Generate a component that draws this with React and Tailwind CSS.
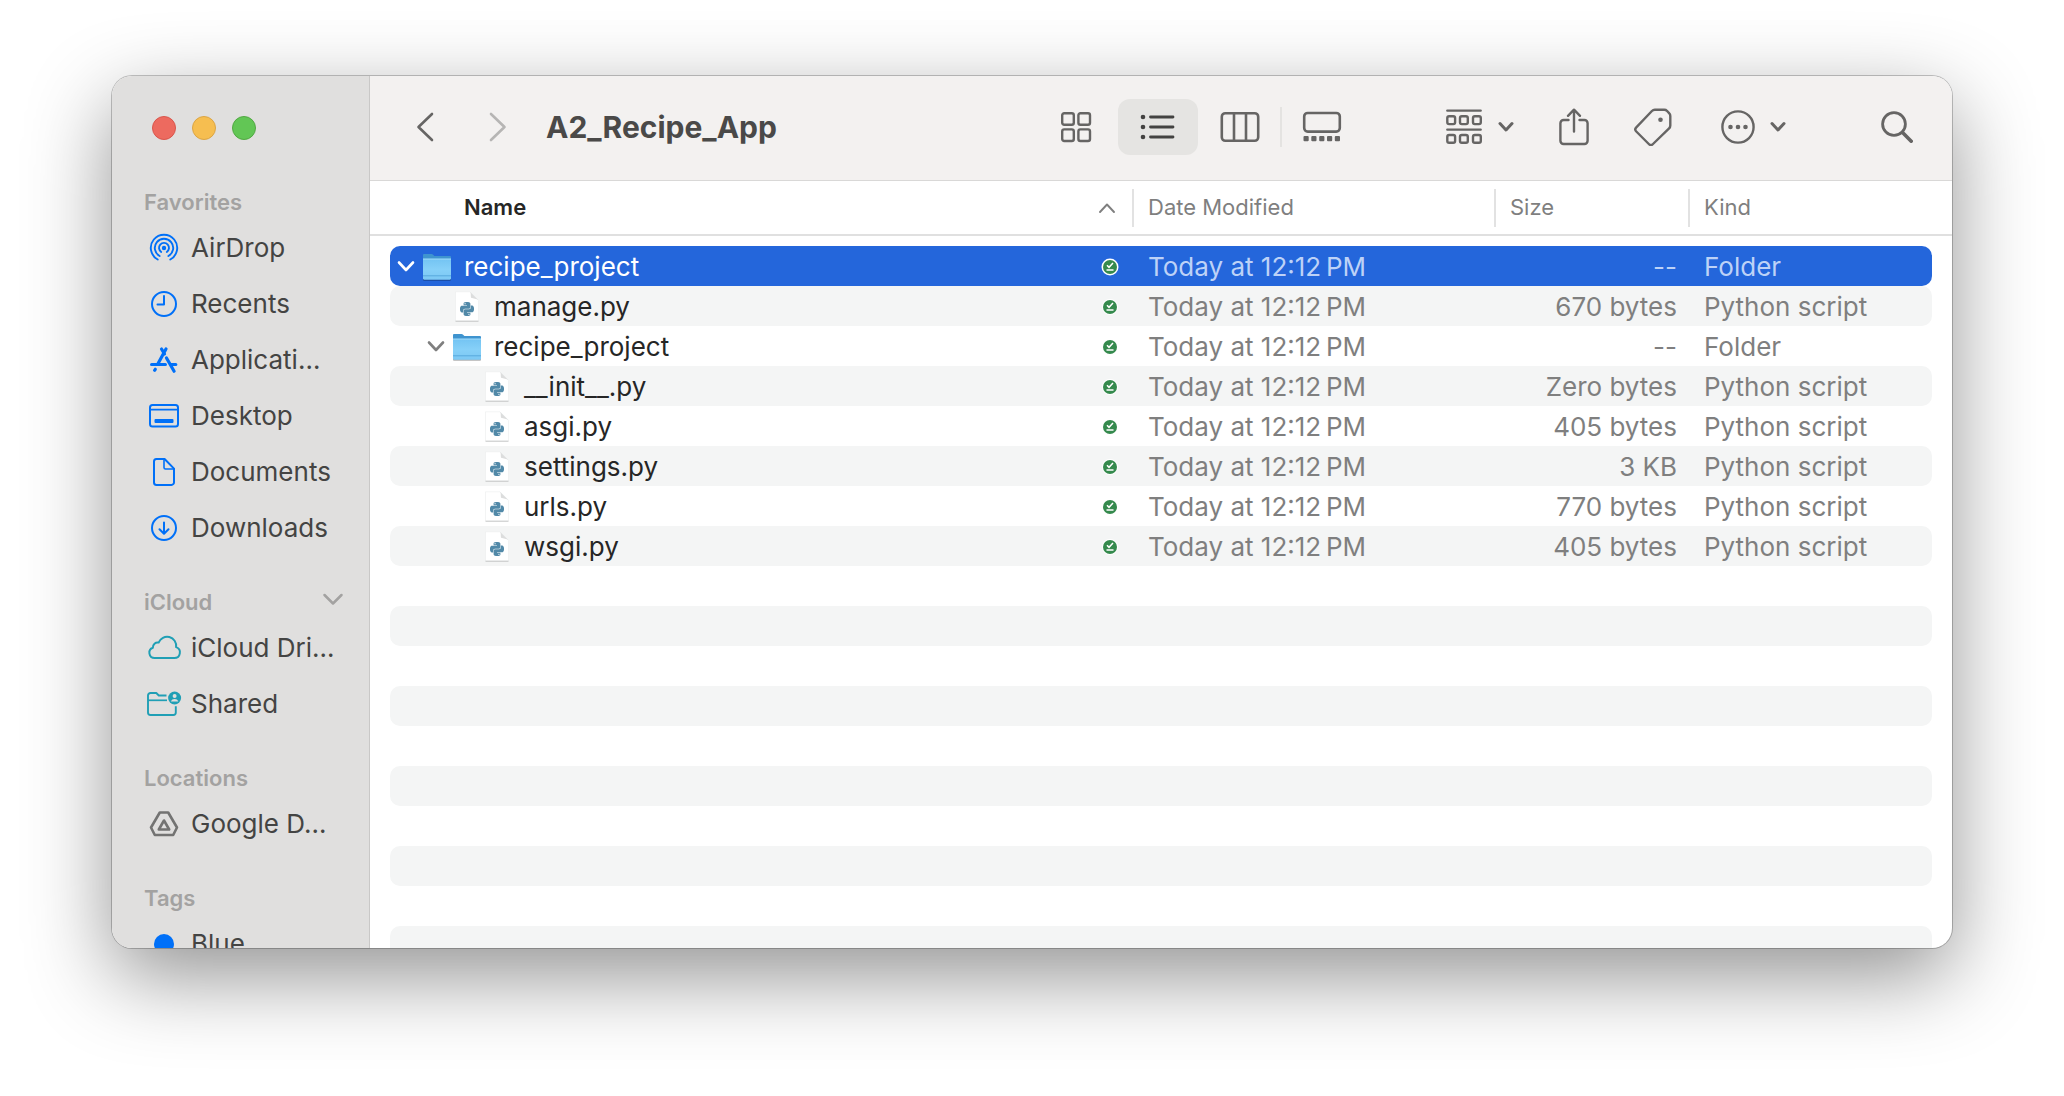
import { SiPython } from "react-icons/si";

const strokeProps = { fill: "none", stroke: "currentColor", strokeLinecap: "round", strokeLinejoin: "round" };

/* ---------- toolbar icons ---------- */

function Chevron({ className, d, viewBox, width = 3 }) {
  return (
    <svg className={className} viewBox={viewBox} {...strokeProps} strokeWidth={width} aria-hidden="true">
      <path d={d} />
    </svg>
  );
}

function GridIcon() {
  return (
    <svg className="h-8 w-8" viewBox="0 0 32 32" {...strokeProps} strokeWidth="2.4" aria-hidden="true">
      <rect x="2.2" y="2.2" width="11.6" height="11.6" rx="2" />
      <rect x="18.4" y="2.2" width="11.6" height="11.6" rx="2" />
      <rect x="2.2" y="18.4" width="11.6" height="11.6" rx="2" />
      <rect x="18.4" y="18.4" width="11.6" height="11.6" rx="2" />
    </svg>
  );
}

function ListIcon() {
  return (
    <svg className="h-8 w-9" viewBox="0 0 36 32" {...strokeProps} strokeWidth="2.8" aria-hidden="true">
      {[6, 16, 26].map((y) => (
        <g key={y}>
          <circle cx="3" cy={y} r="2.3" fill="currentColor" stroke="none" />
          <path d={`M10.500 ${y}h22.500`} />
        </g>
      ))}
    </svg>
  );
}

function ColumnsIcon() {
  return (
    <svg className="h-8 w-10" viewBox="0 0 40 32" {...strokeProps} strokeWidth="2.6" aria-hidden="true">
      <rect x="1.8" y="2.2" width="36.4" height="27.6" rx="3.5" />
      <path d="M14 2.2v27.6M26 2.2v27.6" />
    </svg>
  );
}

function GalleryIcon() {
  return (
    <svg className="h-8 w-10" viewBox="0 0 40 32" {...strokeProps} strokeWidth="2.6" aria-hidden="true">
      <rect x="2.2" y="2" width="35.6" height="18.6" rx="3.5" />
      {[1.5, 9.3, 17.2, 25, 32.8].map((x) => (
        <rect key={x} x={x} y="25" width="5.2" height="5.2" rx="1" fill="currentColor" stroke="none" />
      ))}
    </svg>
  );
}

function GroupIcon() {
  return (
    <svg className="h-9 w-9" viewBox="0 0 36 36" {...strokeProps} strokeWidth="2.4" aria-hidden="true">
      <path d="M1.3 1.6h33.4M1.3 20.6h33.4" />
      {[7.3, 26].map((y) =>
        [1.3, 14, 27].map((x) => <rect key={`${x}-${y}`} x={x} y={y} width="7.8" height="7.8" rx="1.8" />)
      )}
    </svg>
  );
}

function ShareIcon() {
  return (
    <svg className="h-[38px] w-[30px]" viewBox="0 0 30 38" {...strokeProps} strokeWidth="2.4" aria-hidden="true">
      <path d="M9.5 12H4.6a3.2 3.2 0 0 0-3.2 3.2v17.6A3.2 3.2 0 0 0 4.6 36h20.8a3.2 3.2 0 0 0 3.2-3.2V15.2a3.2 3.2 0 0 0-3.2-3.2h-4.900" />
      <path d="M15 23.5V2M9 7.8 15 1.7l6 6.1" />
    </svg>
  );
}

function TagIcon() {
  return (
    <svg className="h-[38px] w-[38px]" viewBox="0 0 38 38" {...strokeProps} strokeWidth="2.4" aria-hidden="true">
      <path d="M20.8 1.8h9.6c1 0 1.800.3 2.500 1l2.400 2.600c.7.7 1 1.500 1 2.500v9.600c0 1.100-.4 2.100-1.200 2.900L19 36c-1.200 1.200-3 1.200-4.200 0L2.300 23.500c-1.200-1.200-1.200-3 0-4.200L17.900 3c.8-.8 1.800-1.200 2.900-1.200Z" />
      <circle cx="26.500" cy="11.800" r="2.300" fill="currentColor" stroke="none" />
    </svg>
  );
}

function MoreIcon() {
  return (
    <svg className="h-9 w-9" viewBox="0 0 36 36" {...strokeProps} strokeWidth="2.4" aria-hidden="true">
      <circle cx="18" cy="18" r="15.6" />
      {[10.5, 18, 25.5].map((x) => (
        <circle key={x} cx={x} cy="18" r="2.300" fill="currentColor" stroke="none" />
      ))}
    </svg>
  );
}

function SearchIcon() {
  return (
    <svg className="h-8 w-8" viewBox="0 0 32 32" {...strokeProps} strokeWidth="2.800" aria-hidden="true">
      <circle cx="13" cy="13" r="11.400" />
      <path d="m21.800 21.800 8.400 8.400" strokeWidth="3.600" />
    </svg>
  );
}

const DownArrow = () => <Chevron className="h-3 w-4" viewBox="0 0 16 12" d="m2 2.500 6 6.500 6-6.500" />;

/* ---------- sidebar icons ---------- */

function AirDropIcon() {
  return (
    <svg className="h-8 w-8" viewBox="0 0 32 32" {...strokeProps} strokeWidth="1.900" aria-hidden="true">
      <circle cx="16" cy="16" r="2.200" fill="currentColor" stroke="none" />
      <path d="M13.200 20a5 5 0 1 1 5.600 0" />
      <path d="M11.600 24a9.200 9.200 0 1 1 8.800 0" />
      <path d="M9.700 27.500a13.200 13.200 0 1 1 12.600 0" />
    </svg>
  );
}

function ClockIcon() {
  return (
    <svg className="h-8 w-8" viewBox="0 0 32 32" {...strokeProps} strokeWidth="2" aria-hidden="true">
      <circle cx="16" cy="16" r="12" />
      <path d="M16 8v8.500H9.500" />
    </svg>
  );
}

function ApplicationsIcon() {
  return (
    <svg className="h-8 w-8" viewBox="0 0 32 32" {...strokeProps} strokeWidth="3.200" aria-hidden="true">
      <path d="m18 5-8.200 15M13.500 5l3 5M18.500 14l7.600 13.200M3.600 20.500h13.800M23.500 20.500h4.300M6.600 26.300l.7-1" />
    </svg>
  );
}

function DesktopIcon() {
  return (
    <svg className="h-8 w-8" viewBox="0 0 32 32" {...strokeProps} strokeWidth="2" aria-hidden="true">
      <rect x="2" y="5" width="28" height="21.500" rx="2.500" />
      <path d="M2 9.600h28" strokeWidth="1.600" />
      <rect x="6.500" y="19" width="19" height="4" rx="1" fill="currentColor" stroke="none" />
    </svg>
  );
}

function DocumentIcon() {
  return (
    <svg className="h-8 w-8" viewBox="0 0 32 32" {...strokeProps} strokeWidth="2" aria-hidden="true">
      <path d="M8.400 3h8.200L26 12.600v13.800a2.500 2.500 0 0 1-2.500 2.500H8.400A2.500 2.500 0 0 1 6 26.400V5.500A2.500 2.500 0 0 1 8.400 3Z" />
      <path d="M16 3v8.500a1.500 1.500 0 0 0 1.500 1.500H26" strokeWidth="1.600" />
    </svg>
  );
}

function DownloadIcon() {
  return (
    <svg className="h-8 w-8" viewBox="0 0 32 32" {...strokeProps} strokeWidth="2" aria-hidden="true">
      <circle cx="16" cy="16" r="12" />
      <path d="M16 10.500v11M11.500 17.200l4.500 4.600 4.500-4.600" />
    </svg>
  );
}

function CloudIcon() {
  return (
    <svg className="h-8 w-9" viewBox="0 0 36 32" {...strokeProps} strokeWidth="2" aria-hidden="true">
      <path d="M8.700 26h19.600a5.600 5.600 0 0 0 1.800-10.900A9.100 9.100 0 0 0 12.600 10.600a4.800 4.800 0 0 0-5.700 5.100A5.300 5.300 0 0 0 8.700 26Z" />
    </svg>
  );
}

function SharedIcon() {
  return (
    <svg className="h-8 w-9" viewBox="0 0 36 32" {...strokeProps} strokeWidth="1.900" aria-hidden="true">
      <path d="M20.500 7.500H12.800L10.300 5H4.500A2.500 2.500 0 0 0 2 7.500v17A2.500 2.500 0 0 0 4.500 27h22.800a2.500 2.500 0 0 0 2.500-2.500v-6.300" strokeLinecap="butt" />
      <path d="M2 12.300h19" strokeWidth="1.700" strokeLinecap="butt" />
      <circle cx="28.600" cy="10" r="6.500" fill="currentColor" stroke="none" />
      <circle cx="28.600" cy="8" r="2" fill="#e0dfde" stroke="none" />
      <path d="M24.900 13.400c.6-1.700 2-2.500 3.700-2.500s3.100.8 3.700 2.500Z" fill="#e0dfde" stroke="none" />
    </svg>
  );
}

function DriveIcon() {
  return (
    <svg className="h-8 w-8" viewBox="0 0 32 32" {...strokeProps} strokeWidth="2.600" aria-hidden="true">
      <path d="M11.800 4.500h8.400L29 19.500 25.200 27H6.800L3 19.500Z" />
      <path d="M16 12.500 21.200 21.500H10.800Z" />
    </svg>
  );
}

function BlueDot() {
  return <span className="h-5 w-5 rounded-full bg-[#0070f8]" />;
}

/* ---------- file icons ---------- */

function FolderIcon() {
  return (
    <svg className="h-8 w-[30px] shrink-0" viewBox="0 0 30 32" aria-hidden="true">
      <defs>
        <linearGradient id="folder-front" x1="0" y1="0" x2="0" y2="1">
          <stop offset="0" stopColor="#74c4f3" />
          <stop offset="0.500" stopColor="#86d0f8" />
          <stop offset="1" stopColor="#7cc8f4" />
        </linearGradient>
      </defs>
      <path d="M1 4.200C1 3.500 1.500 3 2.200 3h7.300c.7 0 1.100.2 1.600.7l1.300 1.300h15.400c.7 0 1.200.5 1.200 1.200V14H1Z" fill="#3f94cf" />
      <path d="M1 28h28v.8c0 .5-.5 1-1.200 1H2.200C1.500 29.800 1 29.300 1 28.800Z" fill="#000" opacity=".3" />
      <path d="M1 8h28v19.500c0 .7-.5 1.200-1.200 1.200H2.200c-.7 0-1.200-.5-1.200-1.200Z" fill="url(#folder-front)" />
      <path d="M1 8h28" stroke="#a3ddfb" strokeWidth="1" />
      <path d="M1 24.800h28" stroke="#58a9dd" strokeWidth="1" />
    </svg>
  );
}

function PythonFileIcon() {
  return (
    <span className="grid h-8 w-[30px] shrink-0 place-items-center">
      <svg className="col-start-1 row-start-1 h-8 w-[30px]" viewBox="0 0 30 32" aria-hidden="true">
        <path d="M3.500 30h23" stroke="#b9bbbb" strokeWidth="1.200" />
        <path d="M3.500 .8H18l8.500 8.500v20.200h-23Z" fill="#fff" stroke="#ebecec" strokeWidth=".6" />
        <path d="M18 .8c1.200 1.200.6 4 1 6 2.600 1 5.500.5 7.500 2.500Z" fill="#dcdddd" />
      </svg>
      <SiPython className="col-start-1 row-start-1 mt-[3px] h-3.5 w-3.5 text-[#5189a8]" aria-hidden="true" />
    </span>
  );
}

function SyncedIcon({ selected }) {
  return (
    <svg className="h-5 w-5" viewBox="0 0 20 20" role="img" aria-label="Synced">
      <circle cx="10" cy="10" r={selected ? 8.500 : 8} fill="#fff" />
      <circle cx="10" cy="10" r="7" fill="#358a4d" />
      <path d="m7 8.300 2 2 4-4.300M6.500 12.900h7" fill="none" stroke="#fff" strokeWidth="1.500" />
    </svg>
  );
}

/* ---------- data ---------- */

const sections = [
  {
    title: "Favorites",
    color: "text-[#0070f8]",
    items: [
      ["AirDrop", AirDropIcon],
      ["Recents", ClockIcon],
      ["Applicati…", ApplicationsIcon],
      ["Desktop", DesktopIcon],
      ["Documents", DocumentIcon],
      ["Downloads", DownloadIcon],
    ],
  },
  {
    title: "iCloud",
    color: "text-[#209fb5]",
    collapsible: true,
    items: [
      ["iCloud Dri…", CloudIcon],
      ["Shared", SharedIcon],
    ],
  },
  { title: "Locations", color: "text-[#737372]", items: [["Google D…", DriveIcon]] },
  { title: "Tags", color: "text-[#0070f8]", items: [["Blue", BlueDot]] },
];

const indents = ["pl-[3px]", "pl-[33px]", "pl-[63px]"];

const files = [
  { name: "recipe_project", level: 0, folder: true, size: "--", selected: true },
  { name: "manage.py", level: 1, size: "670 bytes" },
  { name: "recipe_project", level: 1, folder: true, size: "--" },
  { name: "__init__.py", level: 2, size: "Zero bytes" },
  { name: "asgi.py", level: 2, size: "405 bytes" },
  { name: "settings.py", level: 2, size: "3 KB" },
  { name: "urls.py", level: 2, size: "770 bytes" },
  { name: "wsgi.py", level: 2, size: "405 bytes" },
];

const emptyRows = Array.from({ length: 10 }, (_, i) => i + files.length);

/* ---------- window parts ---------- */

function Sidebar() {
  return (
    <aside className="flex w-[258px] shrink-0 flex-col overflow-hidden border-r border-[#c9c8c7] bg-[#e0dfde]">
      <div className="flex gap-4 pt-10 pl-10">
        <button aria-label="Close" className="h-6 w-6 rounded-full border border-[#d9564c] bg-[#ed6a5f]" />
        <button aria-label="Minimize" className="h-6 w-6 rounded-full border border-[#dba545] bg-[#f6be50]" />
        <button aria-label="Zoom" className="h-6 w-6 rounded-full border border-[#52a843] bg-[#62c655]" />
      </div>
      <nav className="mt-[45px] flex flex-col gap-[30px]">
        {sections.map((section) => (
          <section key={section.title}>
            <h2 className="flex h-[34px] items-center justify-between pr-6 pl-8 text-[22px] font-semibold text-[#a3a2a1]">
              {section.title}
              {section.collapsible && (
                <button aria-label="Collapse iCloud" className="pb-1">
                  <Chevron className="h-4 w-6" viewBox="0 0 24 16" d="m3.500 3 8.500 8.500L20.500 3" width={2.500} />
                </button>
              )}
            </h2>
            <ul>
              {section.items.map(([label, Icon]) => (
                <li key={label}>
                  <a href="#" className="flex h-14 items-center pt-px pl-[33px] text-[26px] whitespace-nowrap text-[#444443]">
                    <span className={`mr-2 flex w-[38px] shrink-0 justify-center ${section.color}`}>
                      <Icon />
                    </span>
                    {label}
                  </a>
                </li>
              ))}
            </ul>
          </section>
        ))}
      </nav>
    </aside>
  );
}

function ViewButton({ label, active, children }) {
  return (
    <button
      aria-label={label}
      aria-pressed={!!active}
      className={`flex h-14 w-20 items-center justify-center rounded-xl ${active ? "bg-[#e5e4e2] text-[#434241]" : ""}`}
    >
      {children}
    </button>
  );
}

function Toolbar() {
  return (
    <header className="flex h-[105px] shrink-0 items-center border-b border-[#d9d8d7] bg-[#f3f1f0] pr-[39px] pb-0.5 pl-11 text-[#666564]">
      <button aria-label="Back" className="mr-[49px]">
        <Chevron className="h-8 w-6" viewBox="0 0 24 32" d="M18 3 4.500 16 18 29" width={2.600} />
      </button>
      <button aria-label="Forward" className="mr-[35px] text-[#b6b5b4]">
        <Chevron className="h-8 w-6" viewBox="0 0 24 32" d="M4 3l13.500 13L4 29" width={2.600} />
      </button>
      <h1 className="text-[30px] font-bold text-[#4a4948]">A2_Recipe_App</h1>
      <div className="mr-[84px] ml-auto flex items-center gap-0.5">
        <ViewButton label="Icon view"><GridIcon /></ViewButton>
        <ViewButton label="List view" active><ListIcon /></ViewButton>
        <ViewButton label="Column view"><ColumnsIcon /></ViewButton>
        <span className="-mx-0.5 h-10 w-0.5 bg-[#e4e3e1]" />
        <ViewButton label="Gallery view"><GalleryIcon /></ViewButton>
      </div>
      <div className="flex items-center">
        <button aria-label="Group items" className="flex items-center gap-4">
          <GroupIcon />
          <DownArrow />
        </button>
        <button aria-label="Share" className="ml-[45px]"><ShareIcon /></button>
        <button aria-label="Edit tags" className="ml-[45px]"><TagIcon /></button>
        <button aria-label="More actions" className="ml-12 flex items-center gap-3.5">
          <MoreIcon />
          <DownArrow />
        </button>
        <button aria-label="Search" className="ml-[95px]"><SearchIcon /></button>
      </div>
    </header>
  );
}

function HeaderCell({ children, last, className = "text-[#7f7f7f]" }) {
  return (
    <th className="border-b-2 border-[#e0e0e0] p-0 font-normal">
      <div className={`flex h-[38px] items-center pl-[14px] text-[22px] ${last ? "" : "border-r-2 border-[#e2e2e2]"} ${className}`}>
        {children}
      </div>
    </th>
  );
}

function FileRow({ file, index }) {
  const striped = index % 2 === 1;
  const bg = file.selected ? "bg-[#2466db]" : striped ? "bg-[#f4f5f5]" : "";
  const detail = file.selected ? "text-[#bdd2f7]" : "text-[#7f7f7f]";
  return (
    <tr className="h-10 text-[26px] leading-[38px]">
      <td />
      <td className={`rounded-l-[10px] px-0 pt-0.5 pb-0 ${bg}`}>
        <div className={`flex items-center ${indents[file.level]}`}>
          <span className={`flex w-[26px] shrink-0 justify-center ${file.selected ? "text-white" : "text-[#7f7f7f]"}`}>
            {file.folder && (
              <button aria-label={`Collapse ${file.name}`} aria-expanded="true" className="block">
                <Chevron className="h-4 w-5" viewBox="0 0 20 16" d="m3 3.500 7 7.500 7-7.500" width={2.600} />
              </button>
            )}
          </span>
          <span className="mr-3 ml-[3px] flex">{file.folder ? <FolderIcon /> : <PythonFileIcon />}</span>
          <span className={file.selected ? "text-white" : "text-[#262626]"}>{file.name}</span>
          <span className="mr-[14px] ml-auto"><SyncedIcon selected={file.selected} /></span>
        </div>
      </td>
      <td className={`pt-0.5 pr-0 pb-0 pl-[14px] ${bg} ${detail}`}>Today at 12:12{"\u2009"}PM</td>
      <td className={`pt-0.5 pr-[13px] pb-0 pl-0 text-right ${bg} ${detail}`}>{file.size}</td>
      <td className={`rounded-r-[10px] pt-0.5 pr-0 pb-0 pl-[14px] ${bg} ${detail}`}>{file.folder ? "Folder" : "Python script"}</td>
      <td />
    </tr>
  );
}

function FileTable() {
  return (
    <table className="w-full table-fixed border-separate border-spacing-0 text-left whitespace-nowrap">
      <colgroup>
        <col className="w-5" />
        <col />
        <col className="w-[362px]" />
        <col className="w-[194px]" />
        <col className="w-[242px]" />
        <col className="w-5" />
      </colgroup>
      <thead>
        <tr className="h-[55px]">
          <td className="border-b-2 border-[#e0e0e0]" />
          <HeaderCell className="justify-between text-[#262626]">
            <span className="pl-[60px] font-semibold">Name</span>
            <Chevron className="mr-4 h-4 w-[18px] text-[#7f7f7f]" viewBox="0 0 18 16" d="m2 12 7-7.500 7 7.500" width={1.900} />
          </HeaderCell>
          <HeaderCell>Date Modified</HeaderCell>
          <HeaderCell>Size</HeaderCell>
          <HeaderCell last>Kind</HeaderCell>
          <td className="border-b-2 border-[#e0e0e0]" />
        </tr>
      </thead>
      <tbody className="before:block before:h-2.5">
        {files.map((file, i) => (
          <FileRow key={i} file={file} index={i} />
        ))}
        {emptyRows.map((i) => (
          <tr key={i} className="h-10">
            <td />
            <td colSpan={4} className={i % 2 === 1 ? "rounded-[10px] bg-[#f4f5f5]" : ""} />
            <td />
          </tr>
        ))}
      </tbody>
    </table>
  );
}

export default function App() {
  return (
    <div className="h-screen overflow-hidden bg-white px-28 pt-[76px] pb-[148px] font-['Inter',sans-serif]">
      <div className="flex h-full overflow-hidden rounded-[20px] bg-white shadow-[0_0_0_1px_rgba(0,0,0,0.22),0_28px_84px_rgba(0,0,0,0.43)]">
        <Sidebar />
        <main className="flex min-w-0 flex-1 flex-col overflow-hidden">
          <Toolbar />
          <FileTable />
        </main>
      </div>
    </div>
  );
}
